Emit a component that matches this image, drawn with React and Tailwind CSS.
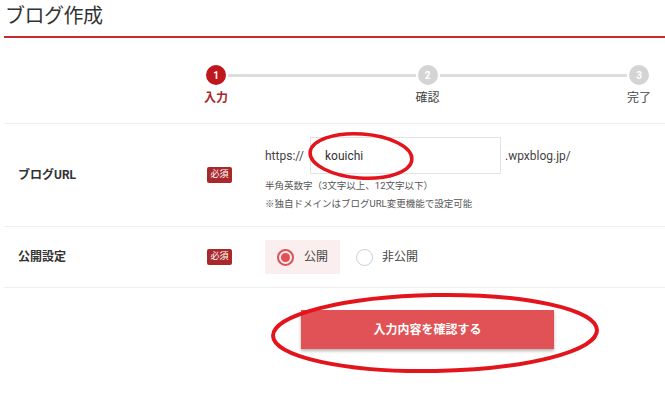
import React from "react";

const font = "font-['Roboto','Noto_Sans_CJK_JP',sans-serif]";

const Badge = () => (
  <span className="inline-flex h-[16px] w-[25px] items-center justify-center rounded-[2px] bg-[#a9282b] text-[9px] text-white">
    必須
  </span>
);

const Step = ({ n, label, active }) => (
  <div className="flex w-[24px] flex-col items-center">
    <div
      className={
        active
          ? "flex h-[20px] w-[20px] items-center justify-center rounded-full bg-[#c0171d] text-[10px] font-bold text-white"
          : "flex h-[20px] w-[20px] items-center justify-center rounded-full bg-[#d4d4d4] text-[10px] font-bold text-white"
      }
    >
      {n}
    </div>
    <div
      className={
        active
          ? "mt-[4px] whitespace-nowrap text-[12px] font-bold text-[#a8282b]"
          : "mt-[4px] whitespace-nowrap text-[12px] text-[#444]"
      }
    >
      {label}
    </div>
  </div>
);

const App = () => {
  return (
    <div className={`relative h-[399px] w-[665px] overflow-hidden bg-white text-[#333] ${font}`}>
      {/* header */}
      <div className="ml-[4px] h-[38px] border-b-[2px] border-[#c42a2f] pl-[1px] pt-[2px]">
        <h1 className="text-[20px] leading-[28px] tracking-[-0.5px] text-[#333]">ブログ作成</h1>
      </div>

      {/* steps */}
      <div className="h-[85px] pt-[27px]">
        <div className="ml-[204px] flex w-[447px] items-start">
          <Step n="1" label="入力" active />
          <div className="mt-[9px] h-[3px] flex-1 bg-[#dddddd]" />
          <Step n="2" label="確認" />
          <div className="mt-[9px] h-[3px] flex-1 bg-[#dddddd]" />
          <Step n="3" label="完了" />
        </div>
      </div>

      {/* URL row */}
      <div className="ml-[4px] flex h-[103px] border-t border-[#eeeeee]">
        <div className="flex w-[203px] items-center pl-[14px] text-[12px] font-bold text-[#333]">ブログURL</div>
        <div className="flex w-[58px] items-center">
          <Badge />
        </div>
        <div className="flex flex-col pt-[13px]">
          <div className="flex h-[37px] items-center">
            <span className="w-[45px] text-[12px] text-[#444]">https://</span>
            <div className="flex h-[37px] w-[191px] items-center border border-[#e3e3e3] pl-[14px] text-[12px] text-[#333]">
              kouichi
            </div>
            <span className="ml-[4px] text-[12px] text-[#444]">.wpxblog.jp/</span>
          </div>
          <div className="mt-[5px] text-[9.5px] leading-[14px] text-[#555]">半角英数字（3文字以上、12文字以下）</div>
          <div className="mt-[4px] text-[9.5px] leading-[14px] text-[#555]">※独自ドメインはブログURL変更機能で設定可能</div>
        </div>
      </div>

      {/* publish row */}
      <div className="ml-[4px] flex h-[62px] border-y border-[#eeeeee]">
        <div className="flex w-[203px] items-center pl-[14px] text-[12px] font-bold text-[#333]">公開設定</div>
        <div className="flex w-[58px] items-center">
          <Badge />
        </div>
        <div className="flex items-center">
          <div className="flex h-[34px] w-[75px] items-center bg-[#fbeeee] pl-[12px]">
            <span className="flex h-[17px] w-[17px] items-center justify-center rounded-full border-[2px] border-[#e05055]">
              <span className="h-[9px] w-[9px] rounded-full bg-[#e05055]" />
            </span>
            <span className="ml-[10px] text-[12px] text-[#444]">公開</span>
          </div>
          <div className="ml-[16px] flex items-center">
            <span className="h-[17px] w-[17px] rounded-full border-[1.5px] border-[#cccccc]" />
            <span className="ml-[9px] text-[12px] text-[#444]">非公開</span>
          </div>
        </div>
      </div>

      {/* submit */}
      <div className="pl-[301px] pt-[22px]">
        <button className="h-[39px] w-[253px] bg-[#e05255] text-[12px] font-bold text-white shadow-[0_2px_3px_rgba(0,0,0,0.3)]">
          入力内容を確認する
        </button>
      </div>

      {/* hand-drawn annotation marks */}
      <svg className="pointer-events-none absolute left-0 top-0" width="665" height="399">
        <ellipse cx="361" cy="156" rx="51" ry="22" fill="none" stroke="#e3141c" strokeWidth="3.5" transform="rotate(4 361 156)" />
        <ellipse cx="435" cy="333" rx="162" ry="38" fill="none" stroke="#e3141c" strokeWidth="4" transform="rotate(-1 435 333)" />
      </svg>
    </div>
  );
};

export default App;
